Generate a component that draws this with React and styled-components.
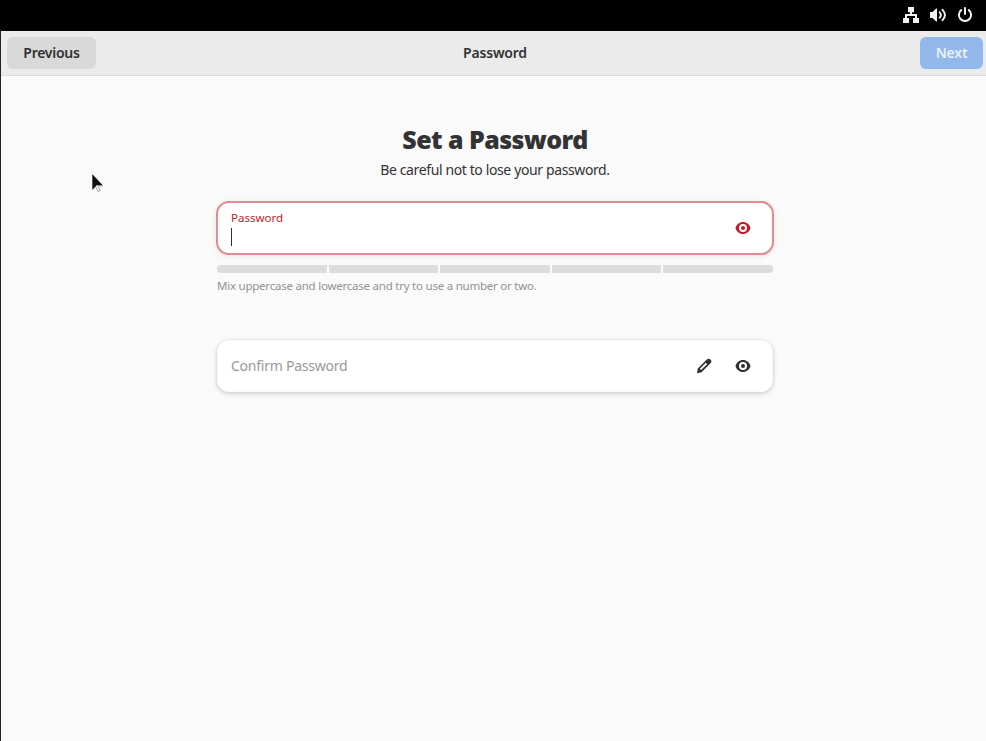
import React from "react";
import styled, { createGlobalStyle } from "styled-components";

const GlobalStyle = createGlobalStyle`
  * { box-sizing: border-box; }
  body {
    margin: 0;
    background: #fafafa;
    color: #333;
    font-family: "Noto Sans", "Open Sans", sans-serif;
    font-size: 14px;
    overflow: hidden;
  }
`;

const Screen = styled.div`
  display: flex;
  flex-direction: column;
  width: 986px;
  height: 741px;
  border-left: 1px solid #222;
  background: #fafafa;
`;

const TopBar = styled.div`
  display: flex;
  flex: none;
  justify-content: flex-end;
  align-items: center;
  gap: 11px;
  height: 31px;
  margin-left: -1px;
  padding: 0 13px 1px 0;
  background: #000;
  color: #f2f2f2;
`;

const Icon = styled.svg`
  display: block;
  flex: none;
  width: 16px;
  height: 16px;
  fill: currentColor;
`;

const HeaderBar = styled.header`
  display: grid;
  flex: none;
  grid-template-columns: 1fr auto 1fr;
  align-items: center;
  height: 45px;
  padding: 0 3px 0 6px;
  background: #ebebeb;
  border-bottom: 1px solid #dadada;
`;

const Button = styled.button`
  width: ${(p) => p.$width}px;
  height: 32px;
  padding: 0;
  border: 0;
  border-radius: 6px;
  justify-self: ${(p) => (p.$suggested ? "end" : "start")};
  background: ${(p) => (p.$suggested ? "#92b7ea" : "#d9d9d9")};
  color: ${(p) => (p.$suggested ? "#e9f0fa" : "#303030")};
  font: inherit;
  font-weight: 600;
`;

const Text = styled.span`
  display: inline-block;
  white-space: nowrap;
  font-size: ${(p) => p.$size || 14}px;
  font-weight: ${(p) => p.$weight || "inherit"};
  letter-spacing: ${(p) => p.$spacing || 0}px;
  line-height: 20px;
`;

const Page = styled.main`
  display: flex;
  flex-direction: column;
  align-items: center;
  padding: 47px 0 0 3px;
`;

const Title = styled.h1`
  margin: 0;
  font-size: 25px;
  font-weight: 900;
  line-height: 32px;
  letter-spacing: -0.55px;
`;

const Subtitle = styled.p`
  margin: 5px 0 0;
  height: 20px;
`;

const Form = styled.form`
  display: flex;
  flex-direction: column;
  width: 558px;
  margin-top: 21px;
`;

const Entry = styled.div`
  display: flex;
  align-items: center;
  height: 54px;
  padding: 0 21px 0 13px;
  border: 2px solid ${(p) => (p.$error ? "#e08a91" : "transparent")};
  border-radius: 13px;
  background: #fff padding-box;
  box-shadow: ${(p) =>
    p.$error
      ? "0 1px 4px 1px rgba(0,0,0,.07)"
      : "inset 0 0 0 1px #fff, 0 1px 3px rgba(0,0,0,.12), 0 2px 6px rgba(0,0,0,.04)"};
  color: ${(p) => (p.$error ? "#c01c28" : "#303030")};
`;

const Field = styled.div`
  display: flex;
  flex: 1;
  flex-direction: column;
  padding-bottom: ${(p) => (p.$placeholder ? 0 : 2)}px;
  color: ${(p) => (p.$placeholder ? "#999" : "inherit")};
`;

const Caret = styled.span`
  width: 1px;
  height: 18px;
  background: #303030;
`;

const Actions = styled.div`
  display: flex;
  gap: 23px;
`;

const Strength = styled.div`
  display: grid;
  grid-template-columns: repeat(5, 1fr);
  gap: 2px;
  height: 8px;
  margin: 10px 1px 0;
  border-radius: 4px;
  overflow: hidden;
`;

const Segment = styled.span`
  background: #dcdcdc;
`;

const Hint = styled.div`
  height: 20px;
  margin: 3px 1px 43px;
  line-height: 0;
  color: #929292;
`;

const Pointer = styled.svg`
  position: absolute;
  left: 91px;
  top: 173px;
  width: 14px;
  height: 20px;
`;

const Eye = () => (
  <Icon viewBox="0 0 16 16">
    <path
      fillRule="evenodd"
      d="M8 2C4.400 2 1.400 4.400.5 8 1.400 11.600 4.400 14 8 14s6.600-2.400 7.500-6C14.600 4.400 11.600 2 8 2Zm0 2a4 4 0 1 1 0 8 4 4 0 0 1 0-8ZM8 6a2 2 0 1 0 0 4 2 2 0 0 0 0-4Z"
    />
  </Icon>
);

const Pencil = () => (
  <Icon viewBox="0 0 16 16">
    <path
      fillRule="evenodd"
      d="M10.800 1.600a2.500 2.500 0 0 1 3.700 3.600L5.500 14.300 1 15.200l.8-4.700ZM9.800 4.800 3.800 10.800l1.300 1.300L11.200 6.200Z"
    />
  </Icon>
);

const Network = () => (
  <Icon viewBox="0 0 16 16">
    <path d="M5 0h6v5.200H9V7h5v4h2v5h-6v-5h2V9H4v2h2v5H0v-5h2V7h5V5.200H5Z" />
  </Icon>
);

const Volume = () => (
  <Icon viewBox="0 0 16 16">
    <path d="M0 5h2.500L6.200 1.500H7v13h-.8L2.500 11H0Z" />
    <path
      fill="none"
      stroke="currentColor"
      strokeWidth="1.9"
      strokeLinecap="round"
      d="M9.700 5.300c1.400 1.600 1.400 3.800 0 5.400M12.500 2.800c3 3.200 3 7.200 0 10.400"
    />
  </Icon>
);

const Power = () => (
  <Icon viewBox="0 0 16 16">
    <path
      fill="none"
      stroke="currentColor"
      strokeWidth="2"
      strokeLinecap="round"
      d="M8 1v6M4.200 3.100a6.100 6.100 0 1 0 7.600 0"
    />
  </Icon>
);

export default function App() {
  return (
    <>
      <GlobalStyle />
      <Screen>
        <TopBar>
          <Network />
          <Volume />
          <Power />
        </TopBar>
        <HeaderBar>
          <Button $width={89}>
            <Text $spacing={-0.25}>Previous</Text>
          </Button>
          <Text $weight={600} $spacing={-0.2}>Password</Text>
          <Button $width={63} $suggested>
            <Text $spacing={-0.2}>Next</Text>
          </Button>
        </HeaderBar>
        <Page>
          <Title>Set a Password</Title>
          <Subtitle>
            <Text $spacing={-0.38}>Be careful not to lose your password.</Text>
          </Subtitle>
          <Form>
            <Entry $error>
              <Field>
                <Text $size={11.5}>Password</Text>
                <Caret />
              </Field>
              <Actions>
                <Eye />
              </Actions>
            </Entry>
            <Strength>
              {[0, 1, 2, 3, 4].map((n) => (
                <Segment key={n} />
              ))}
            </Strength>
            <Hint>
              <Text $size={11.5} $spacing={-0.23}>
                Mix uppercase and lowercase and try to use a number or two.
              </Text>
            </Hint>
            <Entry>
              <Field $placeholder>
                <Text $spacing={-0.24}>Confirm Password</Text>
              </Field>
              <Actions>
                <Pencil />
                <Eye />
              </Actions>
            </Entry>
          </Form>
        </Page>
        <Pointer viewBox="0 0 14 20">
          <path d="M1.500 1.500v15l3.200-3 2.200 5 2.200-1-2.200-4.700h4.600Z" fill="#fff" stroke="#888" strokeWidth=".8" />
          <path d="M1.500 1.500v15l4.200-4.200h6Z" fill="#111" />
        </Pointer>
      </Screen>
    </>
  );
}
